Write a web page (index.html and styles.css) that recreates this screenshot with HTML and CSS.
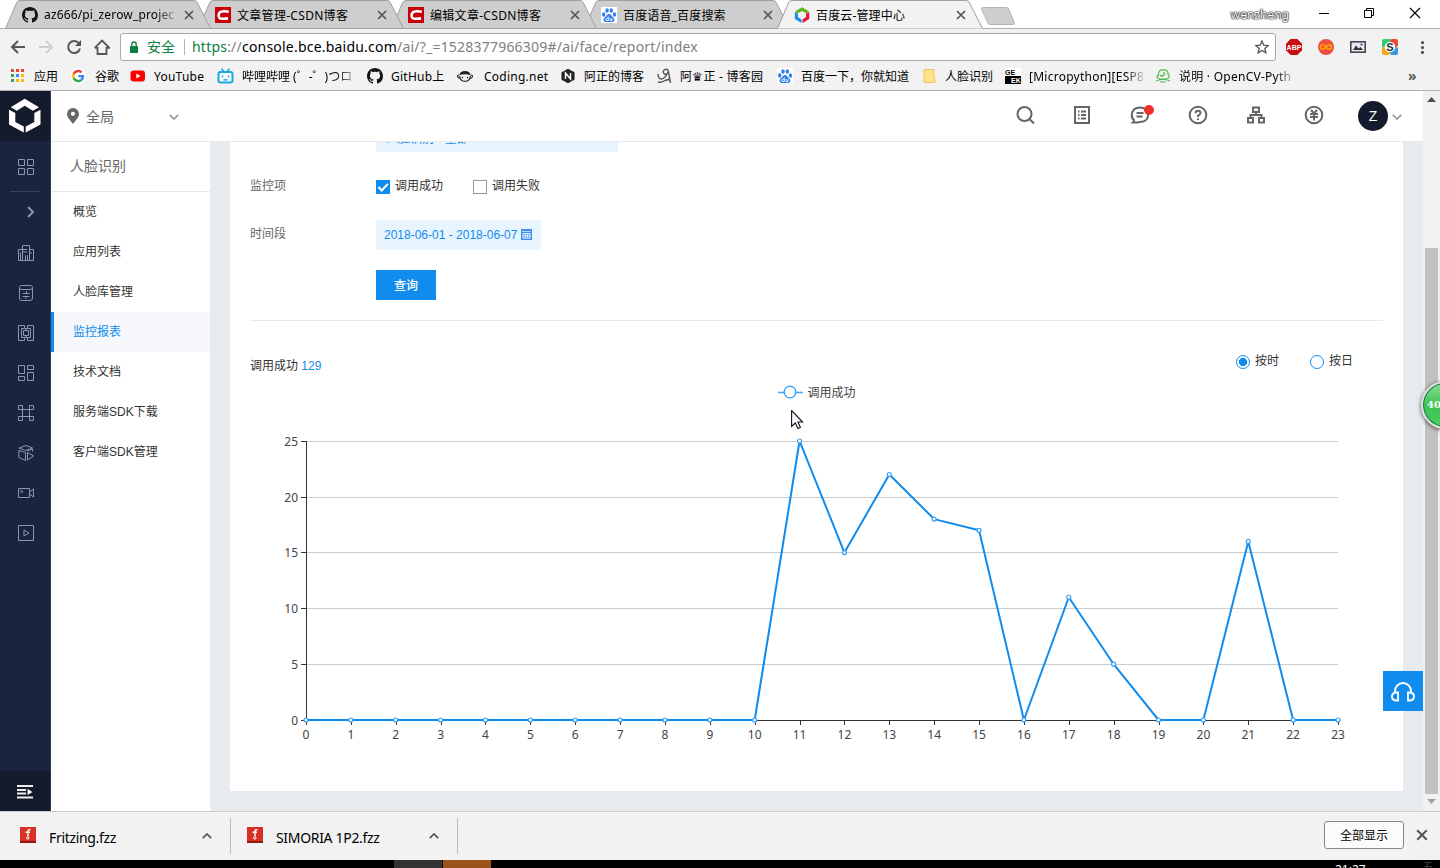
FILE: index.html
```html
<!DOCTYPE html>
<html lang="zh-CN">

<head>
    <meta charset="UTF-8">
    <title>百度云-管理中心</title>
    <link rel="stylesheet" href="styles.css">
</head>

<body>
    <svg class="defs">
        <symbol id="tab-shape" viewBox="0 0 206 29">
            <path d="M.5 28.5 L11.5 3 Q12.500 .5 15 .5 H189 Q191.500 .5 192.500 3 L205.500 28.500"/>
        </symbol>
        <symbol id="close" viewBox="0 0 10 10">
            <path d="M1 1 9 9M9 1 1 9" stroke="#555" stroke-width="1.700" fill="none"/>
        </symbol>
        <symbol id="github" viewBox="0 0 16 16">
            <path fill="#161616" d="M8 0C3.580 0 0 3.580 0 8c0 3.540 2.290 6.530 5.470 7.590.4.070.55-.17.55-.38 0-.19-.01-.82-.01-1.490-2.010.37-2.530-.49-2.690-.94-.09-.23-.48-.94-.82-1.130-.28-.15-.68-.52-.01-.53.63-.01 1.080.58 1.230.82.72 1.210 1.870.87 2.330.66.070-.52.28-.87.51-1.070-1.780-.2-3.640-.89-3.640-3.950 0-.87.31-1.590.82-2.150-.08-.2-.36-1.020.080-2.120 0 0 .67-.21 2.200.82.64-.18 1.320-.27 2-.27s1.360.090 2 .27c1.530-1.040 2.200-.82 2.200-.82.44 1.100.16 1.920.080 2.120.51.56.82 1.270.82 2.150 0 3.070-1.870 3.750-3.650 3.950.29.25.54.73.54 1.480 0 1.070-.01 1.930-.01 2.200 0 .21.15.46.55.38A8.010 8.010 0 0 0 16 8c0-4.420-3.580-8-8-8z"/>
        </symbol>
        <symbol id="csdn" viewBox="0 0 16 16">
            <rect width="16" height="16" fill="#c7000b"/>
            <path d="M13.800 4.700Q11 4.200 8.500 4.300C5 4.400 3.800 6 3.600 8.200 3.400 10.800 4.800 11.700 7.500 11.800Q10 11.900 13 11.400" fill="none" stroke="#fff" stroke-width="2.600"/>
        </symbol>
        <symbol id="baidu" viewBox="0 0 16 16">
            <rect width="16" height="16" fill="#fff"/>
            <g fill="#2f80ed">
                <ellipse cx="2.700" cy="7.500" rx="1.700" ry="2.200"/>
                <ellipse cx="6" cy="3.500" rx="1.700" ry="2.300"/>
                <ellipse cx="10.300" cy="3.500" rx="1.700" ry="2.300"/>
                <ellipse cx="13.500" cy="7.500" rx="1.600" ry="2.200"/>
                <path d="M8 7C10 7 10.500 9 12 10.200 14.500 12 13.500 15 11 15H5C2.500 15 1.500 12 4 10.200 5.500 9 6 7 8 7Z"/>
            </g>
            <path d="M7.300 9.500V13.500H5.700Q4.500 13.500 4.700 12 5 11 7 11M9 11V13.500H11V11" fill="none" stroke="#fff" stroke-width=".9"/>
        </symbol>
        <symbol id="fritzing" viewBox="0 0 16 16">
            <rect width="16" height="16" fill="#d93025"/>
            <rect y="14" width="16" height="2" fill="#8f1d12"/>
            <path d="M10.500 3Q8 1.800 8 4.500V9.500M5.500 5.300H10" fill="none" stroke="#fff" stroke-width="1.400"/>
            <circle cx="7.800" cy="11" r="1.200" fill="none" stroke="#fff"/>
        </symbol>
        <symbol id="down" viewBox="0 0 10 6">
            <path d="M.8.8 5 5 9.200.8" fill="none" stroke="currentColor" stroke-width="1.700"/>
        </symbol>
    </svg>

    <!-- tab strip -->
    <div class="tabs">
        <div class="tab">
            <svg class="shape"><use href="#tab-shape"/></svg>
            <svg class="fav"><use href="#github"/></svg>
            <span class="tab-title fade">az666/pi_zerow_projec</span>
            <svg class="tab-close"><use href="#close"/></svg>
        </div>
        <div class="tab">
            <svg class="shape"><use href="#tab-shape"/></svg>
            <svg class="fav"><use href="#csdn"/></svg>
            <span class="tab-title">文章管理-CSDN博客</span>
            <svg class="tab-close"><use href="#close"/></svg>
        </div>
        <div class="tab">
            <svg class="shape"><use href="#tab-shape"/></svg>
            <svg class="fav"><use href="#csdn"/></svg>
            <span class="tab-title">编辑文章-CSDN博客</span>
            <svg class="tab-close"><use href="#close"/></svg>
        </div>
        <div class="tab">
            <svg class="shape"><use href="#tab-shape"/></svg>
            <svg class="fav"><use href="#baidu"/></svg>
            <span class="tab-title han">百度语音_百度搜索</span>
            <svg class="tab-close"><use href="#close"/></svg>
        </div>
        <div class="tab on">
            <svg class="shape"><use href="#tab-shape"/></svg>
            <svg class="fav" viewBox="0 0 16 16">
                <path d="M1.500 5.500V4L8 .3 14.500 4V5.500L11.500 6 8 4 4.500 6Z" fill="#5fb61e"/>
                <path d="M.8 5 4 6.500V10L7.500 12.500V16L.8 12Z" fill="#1a8ff0"/>
                <path d="M15.200 5 12 6.500V10L8.500 12.500V16L15.200 12Z" fill="#e4183c"/>
            </svg>
            <span class="tab-title han">百度云-管理中心</span>
            <svg class="tab-close"><use href="#close"/></svg>
        </div>
        <svg class="new-tab" viewBox="0 0 36 19"><path d="M3 .5H26.500Q28 .5 28.700 2L34.500 16Q35 17.500 33.500 17.500H10Q8.500 17.500 7.800 16L1.500 2Q1.200.5 3 .5Z" fill="#cecece" stroke="#b5b5b5"/></svg>
        <div class="win">
            <span class="user">wenzheng</span>
            <svg class="win-min" viewBox="0 0 12 12"><path d="M1 6.500H11" stroke="#000"/></svg>
            <svg class="win-max" viewBox="0 0 12 12"><path d="M1.500 3.500H8.500V10.500H1.500ZM3.500 3.500V1.500H10.500V8.500H8.500" fill="none" stroke="#000"/></svg>
            <svg class="win-close" viewBox="0 0 12 12"><path d="M1 1 11 11M11 1 1 11" stroke="#000" stroke-width="1.100"/></svg>
        </div>
    </div>

    <!-- address bar -->
    <div class="toolbar">
        <div class="nav">
            <svg viewBox="0 0 16 16"><path d="M15 8H2.500M8 2 2 8 8 14" fill="none" stroke="#555" stroke-width="2"/></svg>
            <svg viewBox="0 0 16 16"><path d="M1 8H13.500M8 2 14 8 8 14" fill="none" stroke="#d0d0d0" stroke-width="2"/></svg>
            <svg viewBox="0 0 16 16"><path d="M13 4.500A6 6 0 1 0 14 9.500" fill="none" stroke="#555" stroke-width="2"/><path d="M15 1V7H9Z" fill="#555"/></svg>
            <svg viewBox="0 0 16 16"><path d="M3.500 8V15H12.500V8M.8 8.800 8 1.500 15.200 8.800H12M4 8.800H.8" fill="none" stroke="#555" stroke-width="1.800"/></svg>
        </div>
        <div class="omnibox">
            <svg class="lock" viewBox="0 0 10 12"><rect x="1" y="5" width="8" height="7" rx=".6" fill="#0b8043"/><path d="M2.800 5V3.200A2.200 2.200 0 0 1 7.200 3.200V5" fill="none" stroke="#0b8043" stroke-width="1.300"/></svg>
            <span class="secure">安全</span>
            <span class="url"><i class="green">https</i>://<b>console.bce.baidu.com</b>/ai/?_=1528377966309#/ai/face/report/index</span>
            <svg class="star" viewBox="0 0 14 14"><path d="M7 1 8.700 5.200 13.200 5.500 9.800 8.400 10.900 12.800 7 10.400 3.100 12.800 4.200 8.400.8 5.500 5.300 5.200Z" fill="none" stroke="#555" stroke-width="1.300"/></svg>
        </div>
        <div class="exts">
            <svg viewBox="0 0 16 16"><path d="M4.700 0H11.300L16 4.700V11.300L11.300 16H4.700L0 11.300V4.700Z" fill="#c70d0d"/><text x="8" y="10.700" class="abp">ABP</text></svg>
            <svg viewBox="0 0 16 16"><circle cx="8" cy="8" r="8" fill="#f04e43"/><path d="M8 8C6 5 2.500 5 2.500 8S6 11 8 8 13.500 5 13.500 8 10 11 8 8Z" fill="none" stroke="#ffa800" stroke-width="1.500"/></svg>
            <svg viewBox="0 0 16 16"><rect x=".8" y="2.800" width="14.400" height="10.400" fill="#e8e8f2" stroke="#484756" stroke-width="1.600"/><path d="M3 11 6 6.500 8.500 9.500 10.500 8 13 11Z" fill="#333"/><circle cx="11.500" cy="5.500" r="1" fill="#333"/></svg>
            <svg viewBox="0 0 16 16"><rect width="9" height="9" rx="2" fill="#2ecc71"/><rect x="8" width="8" height="8" rx="2" fill="#ef4836"/><rect y="8" width="8" height="8" rx="2" fill="#f5a623"/><rect x="8" y="8" width="8" height="8" rx="2" fill="#3498db"/><circle cx="8" cy="8" r="5.300" fill="#fff"/><text x="8" y="12" class="ext-s">S</text></svg>
            <svg viewBox="0 0 16 16" fill="#555"><circle cx="8" cy="2" r="2"/><circle cx="8" cy="8" r="2"/><circle cx="8" cy="14" r="2"/></svg>
        </div>
    </div>

    <!-- bookmarks -->
    <div class="bookmarks">
        <a><svg viewBox="0 0 16 16"><path d="M1 1h3v3h-3zM6 1h3v3h-3zM11 1h3v3h-3z" fill="#ea4335"/><path d="M1 6h3v3h-3z" fill="#34a853"/><path d="M6 6h3v3h-3z" fill="#4285f4"/><path d="M11 6h3v3h-3zM6 11h3v3h-3zM11 11h3v3h-3z" fill="#fbbc05"/><path d="M1 11h3v3h-3z" fill="#34a853"/></svg>应用</a>
        <a><svg viewBox="-4 -7 62 62"><circle cx="24" cy="24" r="31" fill="#fff"/><path fill="#EA4335" d="M24 9.500c3.540 0 6.710 1.220 9.210 3.600l6.850-6.850C35.900 2.380 30.470 0 24 0 14.620 0 6.510 5.380 2.560 13.220l7.980 6.190C12.430 13.720 17.740 9.500 24 9.500z"/><path fill="#4285F4" d="M46.980 24.550c0-1.570-.15-3.090-.38-4.550H24v9.020h12.940c-.58 2.960-2.260 5.480-4.780 7.180l7.730 6c4.510-4.180 7.090-10.360 7.090-17.650z"/><path fill="#FBBC05" d="M10.530 28.590c-.48-1.450-.76-2.990-.76-4.590s.27-3.140.76-4.590l-7.980-6.190C.92 16.460 0 20.120 0 24c0 3.880.92 7.540 2.560 10.780l7.970-6.190z"/><path fill="#34A853" d="M24 48c6.480 0 11.930-2.130 15.890-5.810l-7.730-6c-2.150 1.450-4.920 2.300-8.160 2.300-6.260 0-11.570-4.220-13.470-9.910l-7.980 6.190C6.510 42.620 14.620 48 24 48z"/></svg>谷歌</a>
        <a><svg viewBox="0 0 16 16"><rect x=".5" y="2.500" width="14.500" height="11" rx="3" fill="#f00"/><path d="M6.300 5.500V10.500L10.500 8Z" fill="#fff"/></svg><span class="latin">YouTube</span></a>
        <a><svg class="i17" viewBox="0 0 16 16"><rect x="1" y="4" width="14" height="10.500" rx="2" fill="#fff" stroke="#1ba7de" stroke-width="2"/><path d="M4 .8 6.500 3.500M12 .8 9.500 3.500M5 7.500V9.500M11 7.500V9.500M6 11.500Q7 12.500 8 11.500 9 12.500 10 11.500" fill="none" stroke="#1ba7de" stroke-width="1.500"/></svg><span class="fade bili">哔哩哔哩 (゜-゜)つロ</span></a>
        <a><svg><use href="#github"/></svg><span class="latin">GitHub上</span></a>
        <a><svg viewBox="0 0 16 16"><path d="M2.500 7Q3 3 8 3T13.500 7Q8 5.500 2.500 7Z" fill="#222"/><path d="M2.500 7Q0 7 .7 9 1.500 10.500 3 10M13.500 7Q16 7 15.300 9 14.500 10.500 13 10M2.700 8Q3 13.300 8 13.300T13.300 8" fill="none" stroke="#333" stroke-width="1.200"/><circle cx="5.500" cy="9.500" r=".7"/><circle cx="10.500" cy="9.500" r=".7"/></svg><span class="latin coding">Coding.net</span></a>
        <a><svg class="i14" viewBox="0 0 14 16"><path d="M7 .8 13.500 4.300V11.700L7 15.200.5 11.700V4.300Z" fill="#222"/><path d="M4.500 11V5L9.500 11V5" fill="none" stroke="#fff" stroke-width="1.500"/></svg>阿正的博客</a>
        <a><svg viewBox="0 0 16 16"><path d="M2 6Q2 11 5.500 11 9 10.500 11 6M8.500 6Q6 4 8.500 1.800 12 0 12.500 4L14.500 15M8.500 6Q11 7 12 4M2 14Q5 15 9 12.500L14 11" fill="none" stroke="#555" stroke-width="1.400"/></svg><span class="latin">阿♛正 - 博客园</span></a>
        <a><svg><use href="#baidu"/></svg>百度一下，你就知道</a>
        <a><svg class="i14" viewBox="0 0 14 16"><path d="M2 1.500H12V10.500H13V14.500H2Z" fill="#ffe38a" stroke="#edc55b"/></svg>人脸识别</a>
        <a><svg viewBox="0 0 16 16"><rect width="16" height="16" fill="#fff"/><rect y="8" width="16" height="8"/><text x="0" y="7.300" class="geek">GE</text><text x="6" y="14.800" class="geek white">EK</text></svg><span class="fade latin">[Micropython][ESP8</span></a>
        <a><svg viewBox="0 0 16 16"><path d="M5 11C2 11 1 8 3.500 7 3 3 6 1.500 8 2 11 1.500 13.500 3 13 6 15.500 8 14 11 11 11ZM5 7Q7 9 9 7T8 4.500M1 13Q8 10 15 13M5 14H11" fill="none" stroke="#4fba4a" stroke-width="1.200"/></svg><span class="fade latin">说明 · OpenCV-Pyth</span></a>
        <span class="more">»</span>
    </div>

    <!-- page -->
    <div class="page">
        <div class="rail">
            <div class="logo">
                <svg viewBox="0 0 32 35" fill="#fff"><path d="M1.800 9.200 15.700.8 30 9.200 23.800 12.700 15.700 7.700 7.800 12.700Z"/><path d="M0 11.700 6.300 15V24L14.800 28.500V34.500L0 26.500Z"/><path d="M31.500 11.700 25.300 15V24L16.700 28.500V34.500L31.500 26.500Z"/></svg>
            </div>
            <a class="home"><svg viewBox="0 0 16 16"><path d="M.5.5h6v6h-6zM9.500.5h6v6h-6zM.5 9.500h6v6h-6zM9.500 9.500h6v6h-6z"/></svg></a>
            <a class="expand"><svg viewBox="0 0 16 16"><path d="M6 3 11 8 6 13" stroke-width="2"/></svg></a>
            <a><svg viewBox="0 0 16 16"><path d="M.5 4.500H4.500V15.500H.5ZM4.500.5H11.500V15.500H4.500ZM11.500 4.500H15.500V15.500H11.500ZM4.500 4.500H9M4.500 7H9M2.500 7.500V15M7.500 10.500V15.500M9.500 10V15.500M11.500 8H14"/></svg></a>
            <a><svg viewBox="0 0 16 16"><path d="M3.500.5H12.500Q14.500.5 14.500 2.500T12.500 4.500H3.500Q1.500 4.500 1.500 2.500T3.500.5ZM1.500 3V13Q1.500 15.500 4 15.500H12Q14.500 15.500 14.500 13V3M4.500 8.500H11.500M8.500 8.500V6M11.500 11.500H4.500M8 11.500V14"/></svg></a>
            <a><svg viewBox="0 0 16 16"><path d="M.5.5H6.500V3.500H3.500V12.500H6.500V15.500H.5ZM9.500.5H15.500V15.500H9.500V12.500H12.500V3.500H9.500ZM5.500 5.500h5v5h-5zM8 3.500V5.500M8 10.500V12.500M6.500 3.500H9.500M6.500 12.500H9.500"/></svg></a>
            <a><svg viewBox="0 0 16 16"><path d="M.5.5h6v8h-6zM9.500.5h6v4h-6zM.5 11.500h6v4h-6zM9.500 7.500h6v8h-6z"/></svg></a>
            <a><svg viewBox="0 0 16 16"><path d="M.5.5h4v4h-4zM11.500.5h4v4h-4zM.5 11.500h4v4h-4zM11.500 11.500h4v4h-4zM4.500 4.500H11.500M4.500 11.500H11.500M4.500 4V12M11.500 4V12"/></svg></a>
            <a><svg viewBox="0 0 16 16"><path d="M1 3 8 .5 14.500 3 7.500 5.500ZM.8 5.500 7.500 7.500V15.500L.8 12.500ZM9 6 14.500 4V6.500M9.500 7.500V15L15.500 11Z"/></svg></a>
            <a><svg viewBox="0 0 16 16"><path d="M.5 3.500H11.500V12.500H.5ZM11.500 7 15.500 4V12L11.500 9"/><circle cx="3.700" cy="6.500" r="1"/></svg></a>
            <a><svg viewBox="0 0 16 16"><path d="M.5.5H15.500V15.500H.5ZM6 5V11L11 8Z"/></svg></a>
            <a class="fold"><svg viewBox="0 0 16 16"><path d="M0 2H16M0 6H9M0 9.500H9M0 13.500H16" stroke-width="1.900"/><path d="M10.500 5V11L15.500 8Z" fill="#fff" stroke="none"/></svg></a>
        </div>

        <div class="console">
            <div class="header">
                <svg class="pin" viewBox="0 0 12 16"><path fill-rule="evenodd" d="M6 0A6 6 0 0 0 0 6C0 9 3 12 6 16 9 12 12 9 12 6A6 6 0 0 0 6 0ZM6 3.700A2.100 2.100 0 1 1 6 7.900 2.100 2.100 0 0 1 6 3.700Z" fill="#666"/></svg>
                <span class="region">全局</span>
                <svg class="chev"><use href="#down"/></svg>
                <div class="tools">
                    <svg viewBox="0 0 20 20"><circle cx="10.500" cy="9" r="7"/><path d="M15.300 14 20 18.500"/></svg>
                    <svg viewBox="0 0 20 20"><path d="M3 2H17V18H3ZM6 6.500H7.500M9 6.500H14M6 10H7.500M9 10H14M6 13.500H7.500M9 13.500H14"/></svg>
                    <svg viewBox="0 0 20 20"><path d="M3 17.500Q4.500 16.500 4 15.200 1.500 13 1.800 9.500 2.500 2.500 10 2.500T18 9.500 10 17Q6 17.800 3 17.500ZM6.500 8H13.500M6.500 11.500H12.500"/><circle class="dot" cx="19" cy="5" r="5"/></svg>
                    <svg viewBox="0 0 20 20"><circle cx="10" cy="10" r="8.300"/><path d="M7.500 8.200Q7.500 5.700 10 5.700T12.500 8Q12.500 9.200 10 10.800V12M10 13.200V15"/></svg>
                    <svg viewBox="0 0 20 20"><path d="M7 2.500H13V7H7ZM2 13H7V17.500H2ZM13 13H18V17.500H13ZM10 7V10M4.500 13V10H15.500V13"/></svg>
                    <svg viewBox="0 0 20 20"><circle cx="10" cy="10" r="8.300"/><path d="M7 5 10 8.500 13 5M6 9H14M6 12H14M10 8.500V15.500"/></svg>
                </div>
                <span class="avatar">Z</span>
                <svg class="chev"><use href="#down"/></svg>
            </div>

            <div class="body">
                <div class="side">
                    <h2>人脸识别</h2>
                    <ul>
                        <li>概览</li>
                        <li>应用列表</li>
                        <li>人脸库管理</li>
                        <li class="on">监控报表</li>
                        <li>技术文档</li>
                        <li>服务端SDK下载</li>
                        <li>客户端SDK管理</li>
                    </ul>
                </div>
                <div class="main">
                    <div class="card">
                        <div class="form">
                            <span></span>
                            <div class="select">人脸识别 - 全部</div>
                            <label>监控项</label>
                            <div class="checks">
                                <span class="check"><svg viewBox="0 0 14 14"><rect width="14" height="14" fill="#108cee"/><path d="M2.500 7 5.700 10.500 11.800 4" fill="none" stroke="#fff" stroke-width="2"/></svg>调用成功</span>
                                <span class="check"><svg viewBox="0 0 14 14"><rect x=".5" y=".5" width="13" height="13" fill="#fff" stroke="#999"/></svg>调用失败</span>
                            </div>
                            <label>时间段</label>
                            <div class="date">2018-06-01 - 2018-06-07<svg viewBox="0 0 11 11"><path d="M0 0H11V11H0Z" fill="#3d8ff0"/><path d="M1 2.500H10" stroke="#cfe6fb" stroke-width=".8"/><path d="M1.500 4H9.500V9.500H1.500Z" fill="#e8f5fe"/><path d="M2.300 5.700H8.800M2.300 7.900H8.800" stroke="#3d8ff0" stroke-width="1.200" stroke-dasharray="1.500 .8"/></svg></div>
                            <span></span>
                            <button class="btn">查询</button>
                        </div>
                        <div class="summary">
                            <span class="total">调用成功 <em>129</em></span>
                            <span class="radio on">按时</span>
                            <span class="radio">按日</span>
                        </div>
                        <svg id="chart" width="1133" height="380">
                            <path d="M528 12.500H553" stroke="#4aa8f5" stroke-width="1.600"/>
                            <circle cx="540" cy="12" r="5.800" fill="#fff" stroke="#2b9bf4" stroke-width="1.300"/>
                            <text class="legend" x="557.500" y="17">调用成功</text>
                        </svg>
                    </div>
                </div>
            </div>
        </div>

        <div class="scroll">
            <svg viewBox="0 0 9 5"><path d="M0 5 4.500 0 9 5Z" fill="#505050"/></svg>
            <div class="thumb"></div>
            <svg viewBox="0 0 9 5"><path d="M0 0 4.500 5 9 0Z" fill="#a3a3a3"/></svg>
        </div>

        <div class="service">
            <svg viewBox="0 0 24 20"><path d="M4 10.500V9A8 8 0 0 1 20 9V10.500M7 10.500V18.500H5Q1 18 1 14.500T5 10.500ZM17 10.500V18.500H19Q23 18 23 14.500T19 10.500Z" fill="none" stroke="#fff" stroke-width="1.900"/></svg>
        </div>
        <svg class="cursor" viewBox="0 0 13 20"><path d="M.6.5V16.500L4.300 13 6.900 18.500 9.400 17.300 6.900 12H11.600Z" fill="#fff" stroke="#112" stroke-width="1.100"/></svg>
        <div class="ball">40</div>
    </div>

    <!-- downloads -->
    <div class="downloads">
        <div class="file"><svg class="fav"><use href="#fritzing"/></svg><span>Fritzing.fzz</span><svg class="up"><use href="#down"/></svg></div>
        <div class="file"><svg class="fav"><use href="#fritzing"/></svg><span>SIMORIA 1P2.fzz</span><svg class="up"><use href="#down"/></svg></div>
        <button class="show-all">全部显示</button>
        <svg class="bar-close"><use href="#close"/></svg>
    </div>
    <div class="taskbar">
        <span class="task"></span>
        <span class="task orange"></span>
        <span class="clock">21:27</span>
        <span class="ime">五</span>
    </div>

    <script>
    var data = [0, 0, 0, 0, 0, 0, 0, 0, 0, 0, 0, 25, 15, 22, 18, 17, 0, 11, 5, 0, 0, 16, 0, 0];
    var chart = document.getElementById('chart');
    var left = 56, right = 1088, top0 = 61, bottom = 340;
    var step = (right - left) / 23;

    function add(name, attrs, text) {
        var el = document.createElementNS('http://www.w3.org/2000/svg', name);
        for (var k in attrs) {
            el.setAttribute(k, attrs[k]);
        }
        if (text !== undefined) {
            el.textContent = text;
        }
        chart.appendChild(el);
    }

    function getY(v) {
        return bottom - v * (bottom - top0) / 25;
    }

    // y轴
    for (var v = 0; v <= 25; v += 5) {
        var y = Math.floor(getY(v) + 0.3) + 0.5;
        if (v > 0) {
            add('path', { d: 'M' + left + ' ' + y + 'H' + right, 'class': 'grid' });
        }
        add('path', { d: 'M' + (left - 5) + ' ' + y + 'H' + left, 'class': 'axis' });
        add('text', { x: left - 8, y: y + 4.5, 'class': 'label-y' }, v);
    }
    add('path', { d: 'M56.5 61V340.5H' + right, 'class': 'axis' });

    // x轴
    var points = [];
    for (var i = 0; i < data.length; i++) {
        var x = left + i * step;
        add('path', { d: 'M' + (Math.round(x) + 0.5) + ' 340V345', 'class': 'axis' });
        add('text', { x: x, y: 359, 'class': 'label-x' }, i);
        points.push(x + ',' + getY(data[i]));
    }

    add('polyline', { points: points.join(' '), 'class': 'line' });
    for (var j = 0; j < data.length; j++) {
        add('circle', { cx: left + j * step, cy: getY(data[j]), r: 2, 'class': 'point' });
    }
    </script>
</body>

</html>
```

FILE: styles.css
```css
*, *::before, *::after {
    margin: 0;
    padding: 0;
    box-sizing: border-box;
}

body {
    width: 1440px;
    height: 868px;
    overflow: hidden;
    background: #fff;
    font-family: "Noto Sans", "Noto Sans CJK SC", sans-serif;
    font-size: 12px;
    color: #000;
}

svg {
    display: block;
    flex: none;
}

ul {
    list-style: none;
}

em, i, b {
    font-style: normal;
    font-weight: normal;
}

.defs {
    position: absolute;
    width: 0;
    height: 0;
}

.fade {
    -webkit-mask-image: linear-gradient(to right, #000 84%, rgba(0, 0, 0, .2));
    mask-image: linear-gradient(to right, #000 84%, rgba(0, 0, 0, .2));
}

/* tabs */
.tabs {
    display: flex;
    height: 29px;
    padding-left: 5px;
    background: #fff;
    box-shadow: inset 0 -1px #b0b0b0;
}

.tab {
    position: relative;
    z-index: 1;
    display: flex;
    align-items: center;
    flex: none;
    width: 206px;
    height: 29px;
    margin-right: -13px;
    padding: 0 17px;
}

.tab:nth-child(1) {
    z-index: 4;
}

.tab:nth-child(2) {
    z-index: 3;
}

.tab:nth-child(3) {
    z-index: 2;
}

.tab.on {
    z-index: 5;
}

.tab > * {
    position: relative;
}

.tab .shape {
    position: absolute;
    left: 0;
    top: 0;
    width: 206px;
    height: 29px;
    fill: #cecece;
    stroke: #a0a0a0;
}

.tab.on .shape {
    fill: #f2f2f2;
}

.tab:not(.on)::after {
    content: "";
    position: absolute;
    left: 1px;
    right: 1px;
    bottom: 0;
    height: 1px;
    background: #a0a0a0;
}

.fav {
    width: 16px;
    height: 16px;
}

.tab-title {
    width: 132px;
    margin-left: 6px;
    white-space: nowrap;
    letter-spacing: .3px;
}

.tab-title.fade, .tab-title.han {
    letter-spacing: .15px;
}

.tab-close {
    width: 10px;
    height: 10px;
    margin-left: 8px;
}

.new-tab {
    width: 36px;
    height: 19px;
    margin: 7px 0 0 10px;
}

.win {
    display: flex;
    align-items: flex-start;
    margin-left: auto;
    padding: 7px 19px 0 0;
}

.user {
    margin-right: 29px;
    font-size: 12px;
    line-height: 16px;
    color: #fff;
    text-shadow: 0 0 2px #000, 0 0 1px #000, 0 0 1px #000;
}

.win svg {
    width: 12px;
    height: 12px;
}

.win .win-max {
    margin-left: 33px;
}

.win .win-close {
    margin-left: 34px;
}

/* toolbar */
.toolbar {
    display: flex;
    align-items: center;
    height: 35px;
    padding: 1px 10px 0;
    background: #f2f2f2;
}

.nav {
    display: flex;
    gap: 12px;
    width: 110px;
}

.nav svg {
    width: 16px;
    height: 16px;
}

.omnibox {
    display: flex;
    align-items: center;
    width: 1156px;
    height: 28px;
    padding: 0 6px 0 8px;
    border: 1px solid #a9a9a9;
    border-radius: 3px;
    background: #fff;
    font-size: 14px;
}

.lock {
    width: 10px;
    height: 12px;
}

.secure {
    width: 38px;
    margin-left: 8px;
    border-right: 1px solid #b5b5b5;
    line-height: 16px;
    color: #0b8043;
}

.url {
    margin: -2px 0 0 7px;
    letter-spacing: .21px;
    color: #808080;
}

.url b {
    color: #000;
}

.url .green {
    color: #0b8043;
}

.star {
    width: 14px;
    height: 14px;
    margin-left: auto;
}

.exts {
    display: flex;
    gap: 16px;
    margin-left: 10px;
}

.exts svg {
    width: 16px;
    height: 16px;
}

.exts svg:last-child {
    width: 13px;
    height: 13px;
    margin: 2px 0 0 2px;
}

.abp {
    font: bold 7px "Liberation Sans", sans-serif;
    fill: #fff;
    text-anchor: middle;
}

.ext-s {
    font: bold 11px "Liberation Sans", sans-serif;
    fill: #234;
    text-anchor: middle;
}

/* bookmarks */
.bookmarks {
    display: grid;
    grid-template-columns: 61px 59px 87px 150px 90px 104px 95px 121px 145px 83px 150px 253px 20px;
    align-items: center;
    height: 27px;
    padding-left: 10px;
    background: #f2f2f2;
    border-bottom: 1px solid #b0b0b0;
    padding-bottom: 2px;
}

.bookmarks a {
    display: flex;
    align-items: center;
    white-space: nowrap;
}

.bookmarks svg {
    width: 16px;
    height: 16px;
    margin-right: 8px;
}

.bookmarks .i14 {
    width: 14px;
    margin-right: 9px;
}

.bookmarks .i17 {
    width: 17px;
}

.latin {
    letter-spacing: .25px;
}

.bookmarks .fade {
    width: 114px;
}

.bookmarks .bili {
    width: 113px;
}

.bookmarks .coding {
    margin-left: 3px;
}

.more {
    font-size: 14px;
    line-height: 16px;
    font-weight: bold;
    color: #555;
}

.geek {
    font: bold 7px "Liberation Sans", sans-serif;
}

.white {
    fill: #fff;
}

/* page */
.page {
    position: relative;
    display: flex;
    height: 720px;
    overflow: hidden;
    font-family: "Liberation Sans", "Noto Sans CJK SC", sans-serif;
    color: #333;
}

.rail {
    display: flex;
    flex-direction: column;
    width: 51px;
    background: #1b243d;
    border-right: 1px solid #2f3a56;
}

.logo {
    height: 50px;
    padding: 7px 9px;
    background: #141b2c;
}

.logo svg {
    width: 32px;
    height: 35px;
}

.rail a {
    display: flex;
    align-items: center;
    height: 40px;
    padding-left: 18px;
}

.rail a svg {
    width: 16px;
    height: 16px;
    fill: none;
    stroke: #8c96ae;
}

.rail .home {
    height: 51px;
    position: relative;
    padding-top: 1px;
}

.rail .home::after {
    content: "";
    position: absolute;
    left: 10px;
    bottom: 0;
    width: 30px;
    height: 1px;
    background: #37415c;
}

.rail .expand {
    height: 41px;
    padding: 0 0 2px 22px;
}

.rail .fold {
    margin-top: auto;
    padding: 1px 0 0 17px;
    background: #141b2c;
}

.rail .fold svg {
    stroke: #eee;
}

.console {
    display: flex;
    flex-direction: column;
    width: 1372px;
}

.header {
    display: flex;
    align-items: center;
    height: 51px;
    padding: 0 21px 1px 16px;
    background: #fff;
    border-bottom: 1px solid #e7e8eb;
}

.pin {
    width: 12px;
    height: 16px;
}

.region {
    width: 83px;
    margin-left: 7px;
    font-size: 14px;
    color: #666;
}

.chev {
    width: 10px;
    height: 6px;
    margin-top: 2px;
    color: #999;
}

.tools {
    display: flex;
    gap: 38px;
    margin-top: -1px;
    margin-left: auto;
    margin-right: 34px;
}

.tools svg {
    width: 20px;
    height: 20px;
    fill: none;
    stroke: #666;
    stroke-width: 2;
    overflow: visible;
}

.tools .dot {
    fill: #f02d2d;
    stroke: none;
}

.avatar {
    width: 30px;
    height: 30px;
    margin-right: 4px;
    border-radius: 50%;
    background: #141b2c;
    font-size: 14px;
    line-height: 30px;
    text-align: center;
    color: #fff;
}

.body {
    display: flex;
    flex: 1;
}

.side {
    width: 159px;
    background: #fff;
}

.side h2 {
    height: 50px;
    padding-left: 19px;
    border-bottom: 1px solid #e7e8eb;
    font-size: 14px;
    font-weight: normal;
    line-height: 48px;
    color: #666;
}

.side li {
    height: 40px;
    padding-left: 22px;
    line-height: 40px;
}

.side .on {
    padding-left: 19px;
    border-left: 3px solid #108cee;
    background: #f5f7fb;
    color: #108cee;
}

.main {
    flex: 1;
    height: 669px;
    padding: 0 20px 20px;
    overflow: hidden;
    background: #e7ebf0;
}

.card {
    height: 649px;
    padding: 0 20px;
    overflow: hidden;
    background: #fff;
}

.form {
    display: grid;
    grid-template-columns: 126px 1fr;
    grid-template-rows: 30px 28px 30px 30px;
    row-gap: 20px;
    height: 199px;
    margin-top: -20px;
    justify-items: start;
    align-content: start;
    border-bottom: 1px solid #e8e9eb;
}

.form label {
    line-height: 29px;
    color: #666;
}

.select, .date {
    height: 30px;
    padding-left: 8px;
    background: #e8f5fe;
    line-height: 30px;
    color: #108cee;
}

.select {
    width: 242px;
    padding-left: 10px;
    line-height: 34px;
}

.date {
    display: flex;
    align-items: center;
    justify-content: space-between;
    width: 165px;
    padding-right: 9px;
}

.date svg {
    width: 11px;
    height: 11px;
    margin-top: -1px;
}

.checks {
    display: flex;
    gap: 30px;
}

.check {
    display: flex;
    line-height: 29px;
}

.check svg {
    width: 14px;
    height: 14px;
    margin: 8px 5px 0 0;
}

.btn {
    width: 60px;
    height: 30px;
    padding-top: 1px;
    border: none;
    background: #108cee;
    font: 500 12px/30px "Liberation Sans", "Noto Sans CJK SC", sans-serif;
    color: #fff;
}

.summary {
    display: flex;
    height: 59px;
    padding: 26px 29px 0 0;
}

.total {
    margin-right: auto;
    padding-top: 9px;
}

.total em {
    color: #108cee;
}

.radio {
    display: flex;
    align-items: flex-start;
    flex: none;
    width: 44px;
    margin-left: 30px;
    padding-top: 4px;
    white-space: nowrap;
}

.radio::before {
    content: "";
    flex: none;
    width: 14px;
    height: 14px;
    margin: 4px 5px 0 0;
    border: 1px solid #108cee;
    border-radius: 50%;
}

.radio.on::before {
    background: radial-gradient(#108cee 3.8px, #fff 4.4px);
}

/* chart */
#chart {
    font-family: "Noto Sans", "Noto Sans CJK SC", sans-serif;
    font-size: 12px;
    fill: #444;
}

#chart .grid {
    stroke: #ccc;
}

#chart .axis {
    fill: none;
    stroke: #333;
}

#chart .label-x {
    text-anchor: middle;
}

#chart .label-y {
    text-anchor: end;
}

#chart .line {
    fill: none;
    stroke: #108cee;
    stroke-width: 2;
    stroke-linejoin: bevel;
}

#chart .point {
    fill: #fff;
    stroke: #3a9ff2;
    stroke-width: 1.2;
}

/* scrollbar */
.scroll {
    display: flex;
    flex-direction: column;
    align-items: center;
    width: 17px;
    padding: 6px 0 7px;
    background: #f1f1f1;
}

.scroll svg {
    width: 9px;
    height: 5px;
}

.thumb {
    width: 13px;
    height: 546px;
    margin: 146px 0 auto 0;
    background: #c1c1c1;
}

.service {
    position: absolute;
    left: 1383px;
    top: 580px;
    padding: 11px 8px;
    width: 40px;
    height: 40px;
    background: #108cee;
}

.service svg {
    width: 24px;
    height: 20px;
}

.cursor {
    position: absolute;
    left: 791px;
    top: 319px;
    width: 13px;
    height: 20px;
}

.ball {
    position: absolute;
    left: 1421px;
    top: 290px;
    width: 48px;
    height: 48px;
    padding-left: 4px;
    border: 2px solid #ddd;
    border-radius: 50%;
    background: linear-gradient(#8ce094, #3cc353 50%, #4ccb61);
    box-shadow: inset 0 0 0 1px #17704a, 0 1px 4px rgba(0, 0, 0, .7);
    font: bold 10px/44px "DejaVu Serif", serif;
    color: #fff;
}

/* downloads */
.downloads {
    display: flex;
    height: 49px;
    padding-right: 12px;
    border-top: 1px solid #ccc;
    background: #f2f2f2;
}

.file {
    display: flex;
    width: 227px;
    height: 36px;
    margin-top: 6px;
    padding: 9px 18px 0 16px;
    border-right: 1px solid #bbb;
    font-size: 14px;
    letter-spacing: -.32px;
}

.file:first-child {
    width: 231px;
    padding-left: 20px;
}

.file span {
    margin: 1px auto 0 13px;
    line-height: 20px;
}

.file .up {
    width: 10px;
    height: 6px;
    margin-top: 6px;
    color: #555;
    transform: rotate(180deg);
}

.show-all {
    width: 80px;
    height: 28px;
    margin: 9px 12px 0 auto;
    border: 1px solid #888;
    border-radius: 3px;
    background: #fbfbfb;
    font: 12px/24px "Noto Sans CJK SC", sans-serif;
}

.bar-close {
    width: 12px;
    height: 12px;
    margin-top: 17px;
}

.taskbar {
    display: flex;
    height: 8px;
    padding-left: 394px;
    overflow: hidden;
    background: #000;
}

.task {
    width: 48px;
    margin-right: 1px;
    background: #333;
}

.orange {
    background: #9c531b;
}

.clock {
    width: 31px;
    height: 16px;
    margin: 2px 56px 0 auto;
    line-height: 16px;
    color: #fff;
}

.ime {
    width: 18px;
    height: 16px;
    line-height: 16px;
    color: #444;
}
```
